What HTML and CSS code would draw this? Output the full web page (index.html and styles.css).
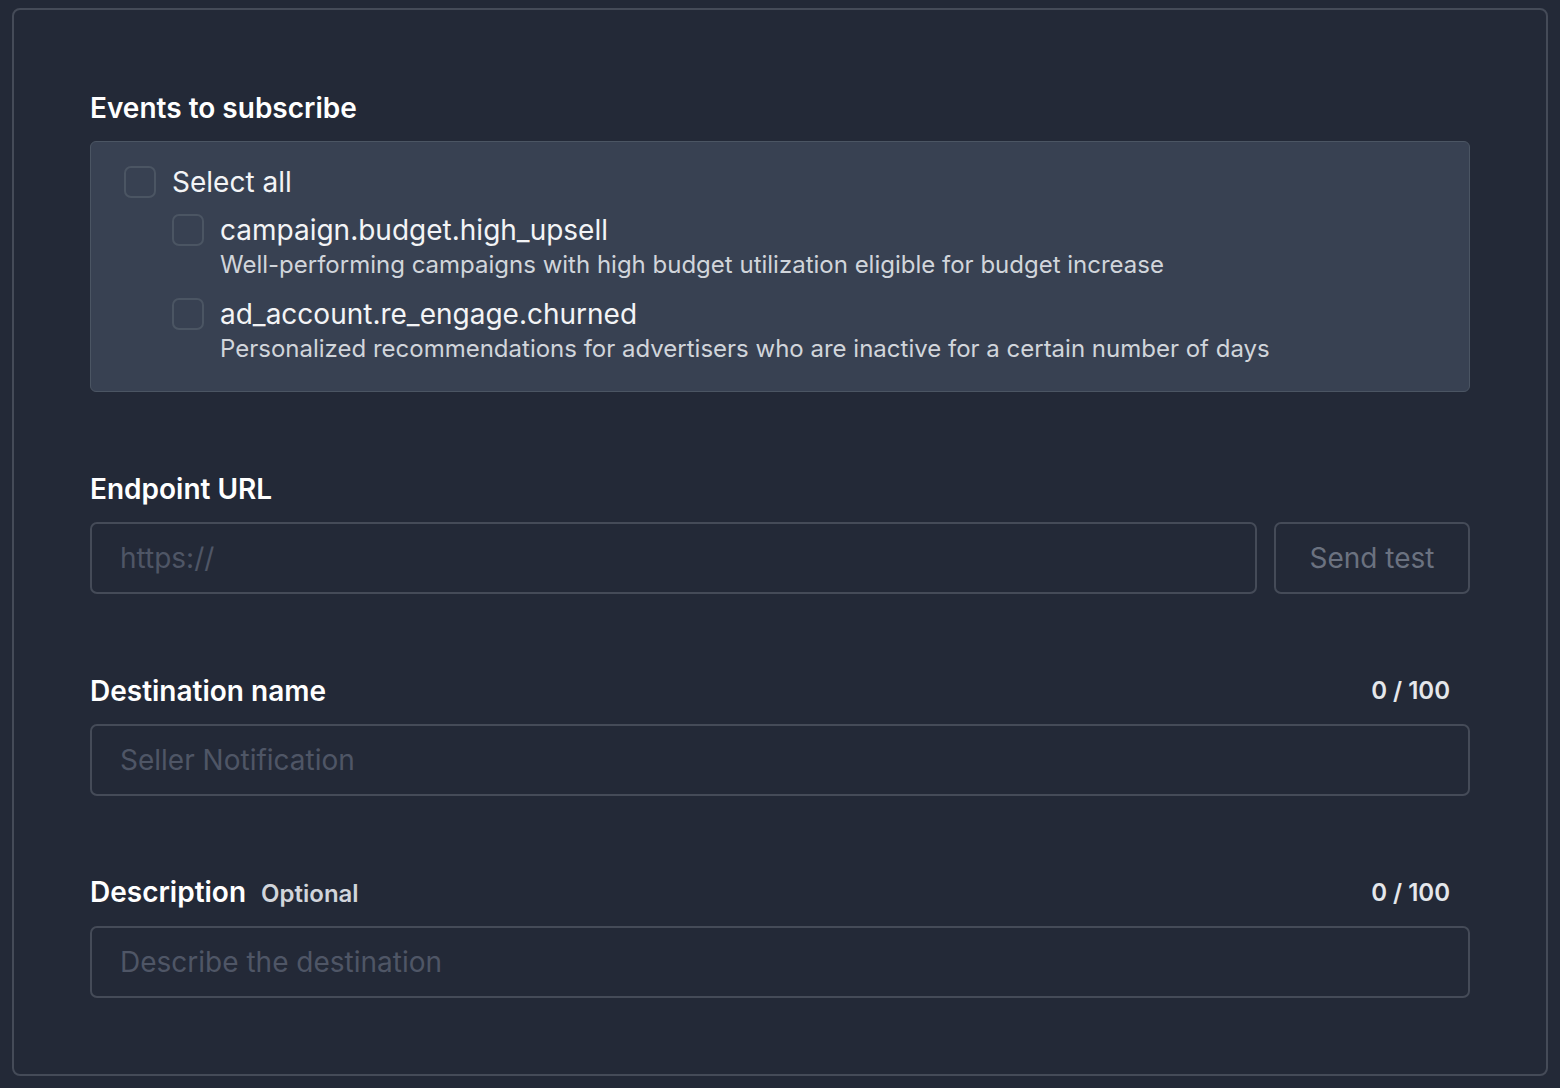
FILE: index.html
```html
<!DOCTYPE html>
<html lang="en">
<head>
    <meta charset="UTF-8">
    <meta name="viewport" content="width=device-width, initial-scale=1.0">
    <title>Webhook destination</title>
    <link rel="stylesheet" href="styles.css">
</head>
<body>
    <div class="card">
        <div class="field">
            <div class="label-row">
                <span class="label">Events to subscribe</span>
            </div>
            <div class="events">
                <label class="check-row">
                    <span class="checkbox"></span>
                    <span class="check-title">Select all</span>
                </label>
                <div class="event-item">
                    <span class="checkbox"></span>
                    <div>
                        <div class="check-title">campaign.budget.high_upsell</div>
                        <div class="check-desc">Well-performing campaigns with high budget utilization eligible for budget increase</div>
                    </div>
                </div>
                <div class="event-item">
                    <span class="checkbox"></span>
                    <div>
                        <div class="check-title">ad_account.re_engage.churned</div>
                        <div class="check-desc">Personalized recommendations for advertisers who are inactive for a certain number of days</div>
                    </div>
                </div>
            </div>
        </div>

        <div class="field">
            <div class="label-row">
                <span class="label">Endpoint URL</span>
            </div>
            <div class="url-row">
                <input class="input" type="text" placeholder="https://">
                <button class="btn-test" disabled>Send test</button>
            </div>
        </div>

        <div class="field">
            <div class="label-row">
                <span class="label">Destination name</span>
                <span class="counter">0 / 100</span>
            </div>
            <input class="input" type="text" placeholder="Seller Notification">
        </div>

        <div class="field">
            <div class="label-row">
                <span class="label">Description <span class="optional">Optional</span></span>
                <span class="counter">0 / 100</span>
            </div>
            <input class="input" type="text" placeholder="Describe the destination">
        </div>
    </div>
</body>
</html>
```

FILE: styles.css
```css
body {
    margin: 0;
    padding: 8px 12px 12px 12px;
    background: #232937;
    font-family: Inter, "Noto Sans", sans-serif;
    color: #f3f4f6;
}
.card {
    border: 2px solid #454b58;
    border-radius: 8px;
    padding: 80px 76px 76px 76px;
    display: flex;
    flex-direction: column;
    gap: 79px;
}
.label-row {
    display: flex;
    justify-content: space-between;
    align-items: center;
    height: 36px;
    margin-bottom: 15px;
}
.label {
    font-size: 28px;
    font-weight: 600;
    line-height: 36px;
    color: #ffffff;
}
.optional {
    font-size: 24px;
    color: #d1d5db;
    margin-left: 8px;
}
.counter {
    font-size: 24px;
    font-weight: 600;
    line-height: 36px;
    color: #e5e7eb;
    margin-right: 20px;
}
.events {
    background: #384152;
    border: 1px solid #4b5563;
    border-radius: 6px;
    padding: 23px 33px 24px 33px;
    display: flex;
    flex-direction: column;
    gap: 14px;
}
.check-row {
    display: flex;
    align-items: center;
    gap: 16px;
}
.event-item {
    display: flex;
    align-items: flex-start;
    gap: 16px;
    margin-left: 48px;
}
.event-item .checkbox {
    margin-top: 1px;
}
.checkbox {
    width: 28px;
    height: 28px;
    border: 2px solid #4b5563;
    border-radius: 7px;
    flex-shrink: 0;
}
.check-title {
    font-size: 28px;
    line-height: 34px;
    color: #f3f4f6;
}
.check-desc {
    font-size: 24px;
    line-height: 36px;
    color: #d1d5db;
}
.url-row {
    display: flex;
    gap: 17px;
}
.input {
    box-sizing: border-box;
    width: 100%;
    height: 72px;
    background: transparent;
    border: 2px solid #454b58;
    border-radius: 7px;
    padding: 0 28px;
    font-family: Inter, "Noto Sans", sans-serif;
    font-size: 28px;
    color: #f3f4f6;
    outline: none;
}
.input::placeholder {
    color: #4f5666;
}
.btn-test {
    flex-shrink: 0;
    width: 196px;
    height: 72px;
    background: transparent;
    border: 2px solid #454b58;
    border-radius: 7px;
    font-family: Inter, "Noto Sans", sans-serif;
    font-size: 28px;
    color: #6b7280;
}
```
